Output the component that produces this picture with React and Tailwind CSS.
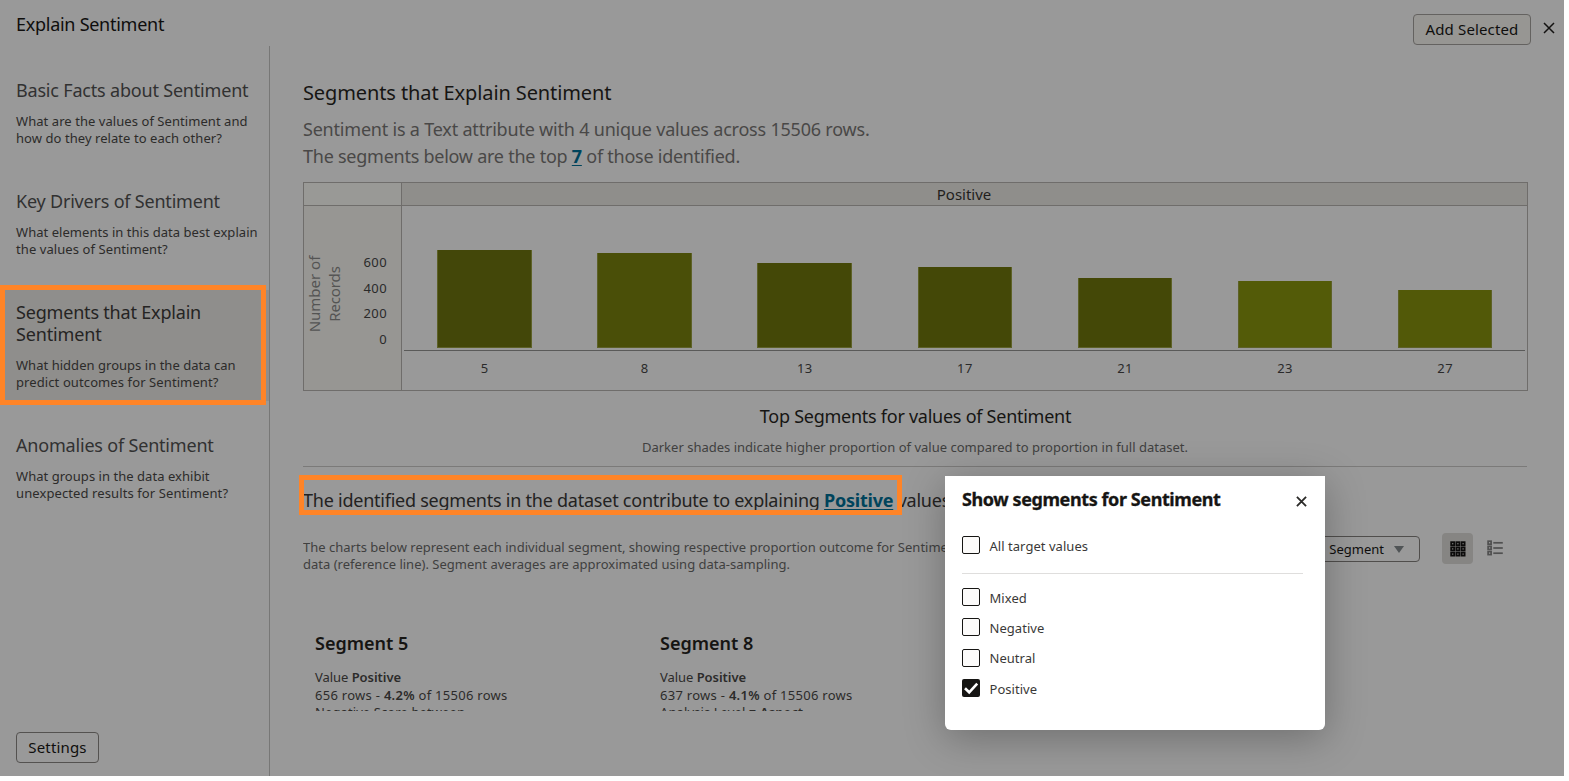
import React from "react";

const TOPICS = [
  {
    title: [["Basic Facts about Sentiment", "tracking-[-0.19px]"]],
    text: [["What are the values of Sentiment and", "tracking-[0.06px]"], ["how do they relate to each other?", "tracking-[0.06px]"]],
  },
  {
    title: [["Key Drivers of Sentiment", "tracking-[-0.2px]"]],
    text: [["What elements in this data best explain", "tracking-[0.04px]"], ["the values of Sentiment?", "tracking-[0.08px]"]],
  },
  {
    active: true,
    title: [["Segments that Explain", "tracking-[-0.19px]"], ["Sentiment", "tracking-[-0.15px]"]],
    text: [["What hidden groups in the data can", "tracking-[0.03px]"], ["predict outcomes for Sentiment?", "tracking-[0.1px]"]],
  },
  {
    title: [["Anomalies of Sentiment", "tracking-[-0.19px]"]],
    text: [["What groups in the data exhibit", "tracking-[0.04px]"], ["unexpected results for Sentiment?", "tracking-[0.1px]"]],
  },
];

const BARS = [
  { label: "5", height: 98, fill: "bg-[#434709]" },
  { label: "8", height: 95.5, fill: "bg-[#4a4f08]" },
  { label: "13", height: 85, fill: "bg-[#444807]" },
  { label: "17", height: 81.3, fill: "bg-[#444807]" },
  { label: "21", height: 70, fill: "bg-[#444807]" },
  { label: "23", height: 67, fill: "bg-[#535b08]" },
  { label: "27", height: 58.3, fill: "bg-[#525908]" },
];

const SEGMENTS = [
  { name: "Segment 5", rows: "656", share: "4.2%", rule: <>Negative Score between</> },
  { name: "Segment 8", rows: "637", share: "4.1%", rule: <>Analysis Level = <b className="font-semibold">Aspect</b></> },
];

function Cross({ className, strokeWidth }) {
  return (
    <svg viewBox="0 0 12 12" className={className} fill="none" stroke="currentColor" strokeWidth={strokeWidth}>
      <path d="M1 1 11 11M11 1 1 11" />
    </svg>
  );
}

function Sidebar() {
  return (
    <nav className="flex w-[270px] shrink-0 flex-col border-r border-[#777776] pt-[22px]">
      <div className="flex grow flex-col gap-[22px]">
        {TOPICS.map((t) => (
          <div key={t.title[0][0]} className={t.active ? "bg-[#8f8e8c] pb-[10px] pl-4 pt-[11px]" : "pb-[10px] pl-4 pt-[11px]"}>
            <div className={t.active ? "text-[18px] leading-[22px] text-[#252423]" : "text-[18px] leading-[22px] text-[#313131]"}>
              {t.title.map(([s, k]) => <div key={s} className={k}>{s}</div>)}
            </div>
            <div className="mt-[12px] text-[13px] leading-[17px] text-[#2c2b2a]">
              {t.text.map(([s, k]) => <div key={s} className={k}>{s}</div>)}
            </div>
          </div>
        ))}
      </div>
      <button className="mb-[13px] ml-4 h-[31px] w-[83px] rounded-[4px] border border-[#545250] text-[15px] leading-[29px] tracking-[0.17px] text-[#0f0e0d]">
        Settings
      </button>
    </nav>
  );
}

function Chart() {
  return (
    <div className="mt-3 flex h-[209px] w-[1225px] border border-[#6f6d6b]">
      <div className="flex w-[98px] shrink-0 flex-col border-r border-[#6f6d6b]">
        <div className="h-[23px] border-b border-[#6f6d6b] bg-[#999996]" />
        <div className="flex grow bg-[#979693]">
          <div className="flex h-[176px] w-[40px] items-center justify-center">
            <div className="-rotate-90 text-center text-[15px] leading-5 text-[#545453]">
              <div>Number of</div>
              <div className="tracking-[-0.1px]">Records</div>
            </div>
          </div>
          <div className="grow pr-[14px] pt-[44px] text-right text-[13px] leading-[25.7px] tracking-[0.4px] text-[#2a2a2a]">
            <div>600</div>
            <div>400</div>
            <div>200</div>
            <div>0</div>
          </div>
        </div>
      </div>
      <div className="flex grow flex-col">
        <div className="h-[23px] border-b border-[#6f6d6b] bg-[#8f8e8b] pr-px text-center text-[15px] leading-[23px] text-[#1f1e1d]">Positive</div>
        <div className="ml-[2px] mr-[2px] flex h-[145px] items-end border-b border-[#5a5a59] pb-[2px] pl-[0.4px]">
          {BARS.map((b) => (
            <div key={b.label} className="flex w-[160.1px] shrink-0 justify-center">
              <div className={`${b.fill} w-[94.4px] border-x border-b border-[#5d6127]`} style={{ height: b.height }} />
            </div>
          ))}
        </div>
        <div className="ml-[2.6px] mt-2 flex text-[13px] leading-[18px] tracking-[0.4px] text-[#2a2a2a]">
          {BARS.map((b) => <div key={b.label} className="w-[160.1px] shrink-0 text-center">{b.label}</div>)}
        </div>
      </div>
    </div>
  );
}

function GridIcon() {
  return (
    <svg viewBox="0 0 16 16" className="size-4" fill="none" stroke="#0c0b0b" strokeWidth="1.8">
      {[0, 1, 2].map((r) => [0, 1, 2].map((c) => (
        <rect key={`${r}${c}`} x={1.2 + c * 5.2} y={1.2 + r * 5.2} width="3" height="3" />
      )))}
    </svg>
  );
}

function ListIcon() {
  return (
    <svg viewBox="0 0 16 16" className="size-4" fill="none" stroke="#505050" strokeWidth="1.7">
      {[0, 1, 2].map((r) => (
        <g key={r}>
          <rect x="1.1" y={1.2 + r * 5.2} width="3" height="3" />
          <path d={`M6.3 ${2.8 + r * 5.2}H15.8`} strokeWidth="1.7" />
        </g>
      ))}
    </svg>
  );
}

function Main() {
  return (
    <main className="ml-[33px] w-[1225px] pt-[33px]">
      <h1 className="text-[20px] leading-[28px] tracking-[-0.11px] text-[#161513]">Segments that Explain Sentiment</h1>
      <div className="mt-[9px] text-[18px] leading-[27px] text-[#494847]">
        <div className="tracking-[-0.205px]">Sentiment is a Text attribute with 4 unique values across 15506 rows.</div>
        <div className="tracking-[-0.25px]">
          The segments below are the top <a className="font-bold text-[#00445c] underline decoration-1 underline-offset-2">7</a> of those identified.
        </div>
      </div>
      <Chart />
      <div className="mt-[12px] text-center text-[18px] leading-[27px] tracking-[-0.26px] text-[#161513]">Top Segments for values of Sentiment</div>
      <div className="mt-[8px] pr-px text-center text-[13px] leading-[18px] tracking-[0.01px] text-[#40403f]">
        Darker shades indicate higher proportion of value compared to proportion in full dataset.
      </div>
      <div className="mt-[10px] h-px w-[1224px] bg-[#7b7a79]" />
      <div className="mt-[20px] text-[18px] leading-[27px] tracking-[-0.24px] text-[#232221]">
        The identified segments in the dataset contribute to explaining{" "}
        <a className="font-bold text-[#00445c] underline decoration-1 underline-offset-2">Positive</a> values
      </div>
      <div className="mt-[19px] flex h-[46px] items-start">
        <div className="mt-[6px] w-[944px] shrink-0 overflow-hidden text-[13px] leading-[17px] tracking-[0.01px] text-[#40403f]">
          <div>The charts below represent each individual segment, showing respective proportion outcome for Sentiment</div>
          <div>data (reference line). Segment averages are approximated using data-sampling.</div>
        </div>
        <div className="mt-[3px] flex h-[26px] w-[173px] shrink-0 items-center justify-end rounded-[4px] border border-[#504e4c] pr-[15px] text-[13px] text-[#0f0e0d]">
          <span className="relative top-px">Segment</span>
          <svg viewBox="0 0 10 7" className="ml-[10px] h-[7px] w-[10px]" fill="#505456"><path d="M0 0H10L5 7Z" /></svg>
        </div>
        <div className="ml-[22px] flex size-[31px] shrink-0 items-center justify-center rounded-[4px] bg-[#868583]"><GridIcon /></div>
        <div className="ml-[14px] mt-[7px]"><ListIcon /></div>
      </div>
      <div className="mt-[51px] flex h-[81px] overflow-hidden pl-3 text-[#2c2b2a]">
        {SEGMENTS.map((s) => (
          <section key={s.name} className="w-[345px] shrink-0 text-[13px] leading-[18px]">
            <h2 className="mb-[11px] text-[18px] font-semibold leading-[27px] text-[#161513]">{s.name}</h2>
            <div className="tracking-[-0.05px]">Value <b className="font-semibold">Positive</b></div>
            <div className="tracking-[0.28px]">{s.rows} rows - <b className="font-semibold">{s.share}</b> of 15506 rows</div>
            <div className="-mt-[1px] tracking-[0.1px]">{s.rule}</div>
          </section>
        ))}
      </div>
    </main>
  );
}

function Option({ label, checked, className }) {
  return (
    <label className={`flex items-center text-[13px] leading-[18px] tracking-[0.04px] text-[#3a3938] ${className}`}>
      <span className={checked
        ? "mr-[9.5px] flex size-[18px] items-center justify-center rounded-[2px] bg-[#161513]"
        : "mr-[9.5px] block size-[18px] rounded-[2px] border border-[#161513] bg-[#fcfbfa]"}>
        {checked && (
          <svg viewBox="0 0 18 18" className="size-[18px]" fill="none" stroke="#fff" strokeWidth="2.6"><path d="M3 9.2 7.2 13.3 15.2 4.6" /></svg>
        )}
      </span>
      <span className="relative top-[0.8px]">{label}</span>
    </label>
  );
}

function SegmentsDialog() {
  return (
    <div role="dialog" className="absolute left-[945px] top-[476px] h-[254px] w-[380px] rounded-b-[6px] bg-white pl-[17px] pr-[22px] pt-[10px] shadow-[0_8px_40px_rgba(0,0,0,0.28)]">
      <div className="flex h-[27px] items-center justify-between">
        <h2 className="text-[18px] font-bold leading-[27px] tracking-[-0.41px] text-[#161513] [-webkit-text-stroke:0.3px_#161513]">Show segments for Sentiment</h2>
        <Cross className="mr-[-4px] mt-[3px] size-[11px] text-[#2b2a28]" strokeWidth="2" />
      </div>
      <Option label="All target values" className="mt-[23px]" />
      <div className="mt-[19px] h-px bg-[#dfdedd]" />
      <div className="mt-[14px] flex flex-col gap-[12.3px]">
        <Option label="Mixed" />
        <Option label="Negative" />
        <Option label="Neutral" />
        <Option label="Positive" checked />
      </div>
    </div>
  );
}

export default function App() {
  return (
    <div className="h-[781px] w-[1569px] overflow-hidden bg-white whitespace-nowrap font-['Noto_Sans','Open_Sans',sans-serif]">
      <div className="relative flex h-[776px] w-[1564px] flex-col overflow-hidden bg-[#999999]">
        <header className="flex h-[46px] shrink-0 items-start justify-between pl-4 pr-[9px]">
          <div className="mt-[11px] text-[18px] leading-[27px] tracking-[-0.27px] text-[#0f0e0d]">Explain Sentiment</div>
          <div className="mt-[14px] flex">
            <button className="h-[31px] w-[118px] rounded-[4px] border border-[#646260] bg-[#979693] text-[15px] leading-[29px] tracking-[0.14px] text-[#0f0e0d]">Add Selected</button>
            <Cross className="ml-[12px] mt-[8px] size-[12px] text-[#131211]" strokeWidth="1.5" />
          </div>
        </header>
        <div className="flex grow">
          <Sidebar />
          <Main />
        </div>
        <div className="absolute left-0 top-[285px] h-[120px] w-[266px] border-[5px] border-[#ff8427]" />
        <div className="absolute left-[299px] top-[475px] h-[40px] w-[603px] border-[5px] border-[#ff8427]" />
        <SegmentsDialog />
      </div>
    </div>
  );
}
